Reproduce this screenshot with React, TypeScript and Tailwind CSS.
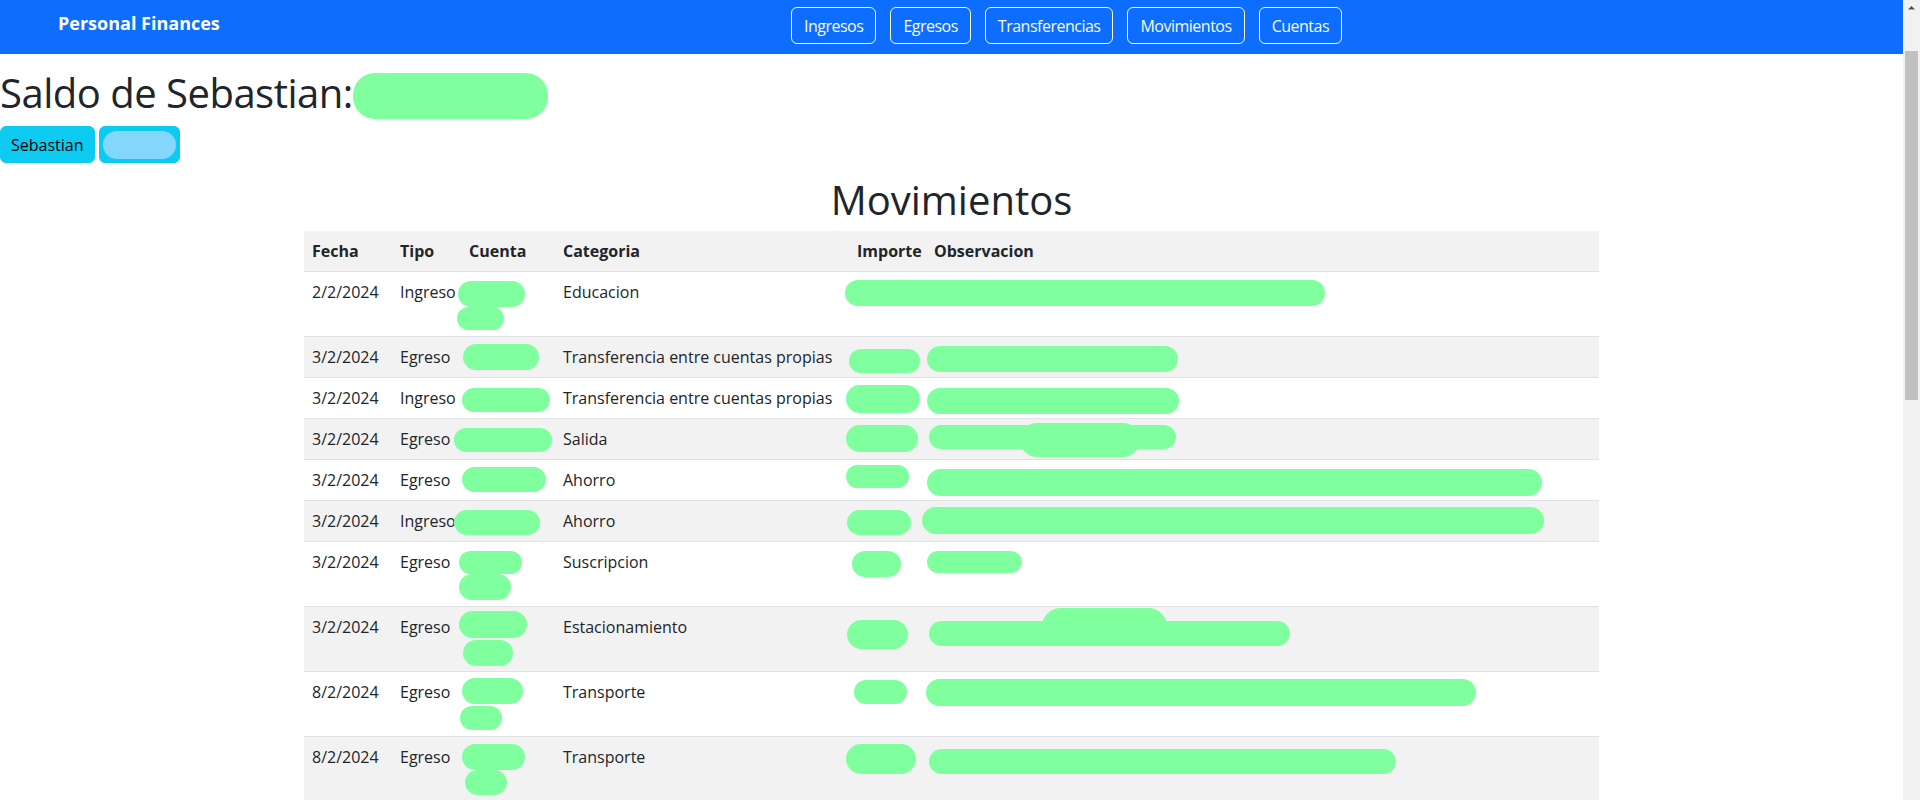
import React from 'react';

type Row = { fecha: string; tipo: string; cat: string; lines: number };

const rows: Row[] = [
  { fecha: '2/2/2024', tipo: 'Ingreso', cat: 'Educacion', lines: 2 },
  { fecha: '3/2/2024', tipo: 'Egreso', cat: 'Transferencia entre cuentas propias', lines: 1 },
  { fecha: '3/2/2024', tipo: 'Ingreso', cat: 'Transferencia entre cuentas propias', lines: 1 },
  { fecha: '3/2/2024', tipo: 'Egreso', cat: 'Salida', lines: 1 },
  { fecha: '3/2/2024', tipo: 'Egreso', cat: 'Ahorro', lines: 1 },
  { fecha: '3/2/2024', tipo: 'Ingreso', cat: 'Ahorro', lines: 1 },
  { fecha: '3/2/2024', tipo: 'Egreso', cat: 'Suscripcion', lines: 2 },
  { fecha: '3/2/2024', tipo: 'Egreso', cat: 'Estacionamiento', lines: 2 },
  { fecha: '8/2/2024', tipo: 'Egreso', cat: 'Transporte', lines: 2 },
  { fecha: '8/2/2024', tipo: 'Egreso', cat: 'Transporte', lines: 2 },
];

// redaction marks over the table: [left, top, width, height] relative to the table
const marks: number[][] = [
  [154, 50, 67, 26], [153, 76, 47, 23], [541, 49, 480, 26],
  [159, 113, 76, 26], [545, 118, 71, 24], [623, 115, 251, 26],
  [158, 157, 88, 24], [542, 154, 74, 28], [623, 157, 252, 26],
  [150, 197, 98, 24], [542, 194, 72, 27], [625, 194, 247, 24], [716, 192, 120, 34],
  [158, 236, 84, 25], [542, 234, 63, 23], [623, 238, 615, 27],
  [150, 279, 86, 25], [543, 279, 64, 25], [618, 276, 622, 27],
  [155, 320, 63, 23], [155, 343, 52, 26], [548, 320, 49, 26], [623, 320, 95, 22],
  [155, 380, 68, 27], [159, 409, 50, 26], [543, 389, 61, 29], [625, 390, 361, 25], [738, 377, 125, 37],
  [158, 447, 61, 26], [156, 475, 42, 24], [550, 449, 53, 24], [622, 448, 550, 27],
  [158, 513, 63, 26], [161, 539, 42, 25], [542, 513, 70, 30], [625, 518, 467, 25],
];

const navLinks = ['Ingresos', 'Egresos', 'Transferencias', 'Movimientos', 'Cuentas'];

export default function App() {
  return (
    <div className="flex h-[800px] w-full overflow-hidden bg-white font-['Open_Sans',sans-serif] text-[#212529]">
      <div className="min-w-0 flex-1">
        <nav className="flex h-[54px] bg-[#0d6efd]">
          <div className="w-[791px] shrink-0 pl-[58px] pt-[8px] text-[18px] font-bold leading-[30px] text-white">
            Personal Finances
          </div>
          <div className="flex items-start gap-[14px] pt-[7px]">
            {navLinks.map((l) => (
              <button
                key={l}
                className="h-[37px] rounded-md border border-[#f8f9fa] px-3 text-[16px] leading-6 tracking-[-0.5px] text-[#f8f9fa]"
              >
                {l}
              </button>
            ))}
          </div>
        </nav>

        <h1 className="mt-[15px] mb-[7px] flex items-start text-[40px] font-medium leading-[1.2] tracking-[-0.5px]">
          <span>Saldo de Sebastian:</span>
          <span className="mt-[4px] inline-block h-[46px] w-[195px] rounded-[22px] bg-[#80ff9f]" />
        </h1>

        <div className="flex gap-1">
          <button className="h-[37px] rounded-md border border-[#0dcaf0] bg-[#0dcaf0] px-[10px] text-[16px] text-black">
            Sebastian
          </button>
          <button className="flex h-[37px] w-[81px] items-center justify-center rounded-md border border-[#0dcaf0] bg-[#0dcaf0]">
            <span className="inline-block h-[28px] w-[73px] rounded-full bg-[#84d6fd]" />
          </button>
        </div>

        <h1 className="mt-[13px] mb-[7px] text-center text-[40px] font-medium leading-[1.2]">Movimientos</h1>

        <div className="relative mx-auto w-[1295px]">
          <table className="w-full table-fixed border-collapse text-left text-[16px] leading-6">
            <colgroup>
              <col className="w-[88px]" />
              <col className="w-[69px]" />
              <col className="w-[94px]" />
              <col className="w-[294px]" />
              <col className="w-[77px]" />
              <col />
            </colgroup>
            <tbody>
              <tr className="border-b border-[#dee2e6] bg-[#f2f2f2] font-bold">
                <td className="p-2">Fecha</td>
                <td className="p-2">Tipo</td>
                <td className="p-2">Cuenta</td>
                <td className="p-2">Categoria</td>
                <td className="p-2">Importe</td>
                <td className="p-2">Observacion</td>
              </tr>
              {rows.map((r, i) => (
                <tr key={i} className={`border-b border-[#dee2e6] align-top ${i % 2 === 1 ? 'bg-[#f2f2f2]' : 'bg-white'}`}>
                  <td className="p-2">{r.fecha}</td>
                  <td className="p-2 whitespace-nowrap">{r.tipo}</td>
                  <td className="p-2">
                    <div className={r.lines === 2 ? 'h-12' : 'h-6'} />
                  </td>
                  <td className="p-2 whitespace-nowrap">{r.cat}</td>
                  <td className="p-2" />
                  <td className="p-2" />
                </tr>
              ))}
            </tbody>
          </table>
          {marks.map((m, i) => (
            <span
              key={i}
              className="absolute rounded-full bg-[#80ff9f]"
              style={{ left: m[0], top: m[1], width: m[2], height: m[3] }}
            />
          ))}
        </div>
      </div>

      <div className="flex w-[17px] shrink-0 flex-col items-center bg-[#f1f1f1]">
        <svg width="17" height="17" viewBox="0 0 17 17" className="shrink-0">
          <path d="M5 9.5 L8.5 6 L12 9.5 Z" fill="#505050" />
        </svg>
        <div className="mt-[34px] h-[349px] w-[13px] bg-[#c1c1c1]" />
      </div>
    </div>
  );
}
